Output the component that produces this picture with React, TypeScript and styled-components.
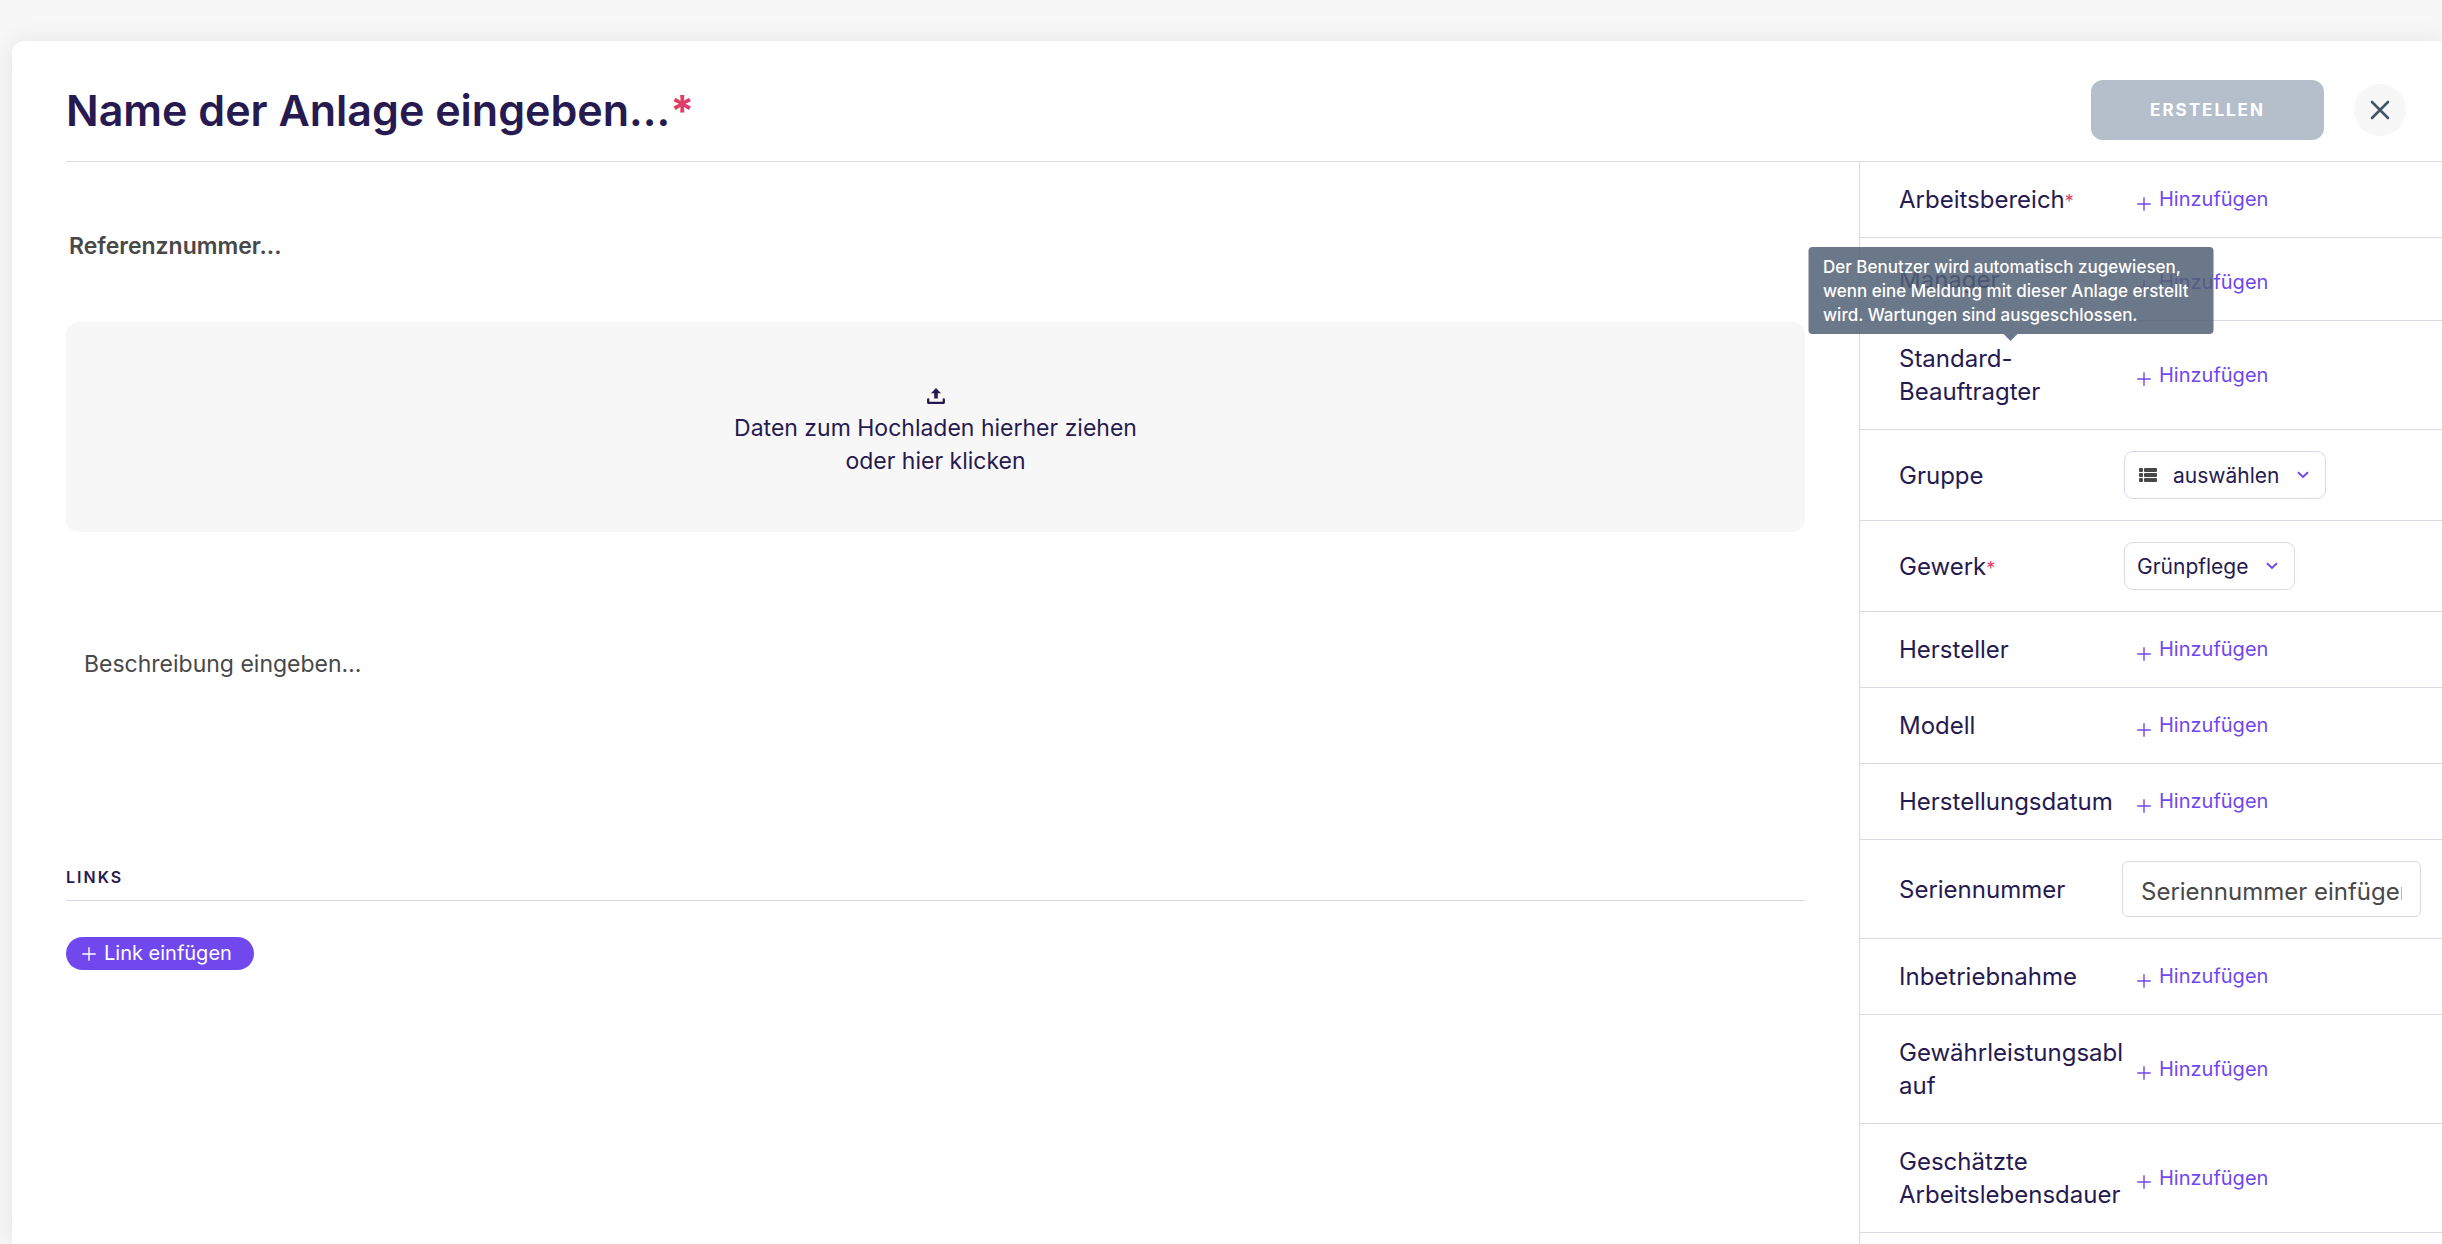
import React from "react";
import styled, { createGlobalStyle } from "styled-components";

const color = {
  ink: "#261a50",
  text: "#484848",
  violet: "#7048ee",
  red: "#dc3d6b",
  line: "#d6dbe4",
  soft: "#f7f7f7",
  slate: "#43556b",
  disabled: "#b5bfcc",
};

const GlobalStyle = createGlobalStyle`
  *, *::before, *::after { box-sizing: border-box; }
  body { margin: 0; background: ${color.soft}; }
  body, button, input, select, textarea {
    font-family: Inter, "Liberation Sans", sans-serif;
  }
`;

const Page = styled.div`
  display: flex;
  flex-direction: column;
  height: 100vh;
  padding: 41px 0 0 12px;
  overflow: hidden;
  color: ${color.ink};
`;

const Card = styled.main`
  flex: 1;
  display: flex;
  flex-direction: column;
  min-height: 0;
  padding-left: 54px;
  background: #fff;
  border-radius: 12px 0 0 0;
  box-shadow: 0 0 24px rgba(0, 0, 0, 0.08);
`;

const Header = styled.header`
  display: flex;
  align-items: center;
  height: 121px;
  flex-shrink: 0;
  padding: 18px 36px 0 0;
  border-bottom: 1px solid ${color.line};
`;

const TitleField = styled.div`
  flex: 1;
  display: flex;
  align-items: center;
  font-size: 43px;
  line-height: 60px;
  font-weight: 700;
`;

const TitleInput = styled.input`
  field-sizing: content;
  padding: 0;
  border: 0;
  outline: 0;
  background: none;
  color: ${color.ink};
  font-size: 43px;
  line-height: 60px;
  font-weight: 600;
  &::placeholder { color: ${color.ink}; opacity: 1; }
`;

const Required = styled.span<{ $small?: boolean }>`
  color: ${color.red};
  font-size: ${(p) => (p.$small ? "18px" : "inherit")};
  line-height: 1;
`;

const CreateButton = styled.button`
  height: 60px;
  width: 233px;
  border: 0;
  border-radius: 12px;
  background: ${color.disabled};
  color: #fff;
  font-size: 17px;
  font-weight: 700;
  letter-spacing: 2px;
  text-transform: uppercase;
`;

const CloseButton = styled.button`
  display: flex;
  align-items: center;
  justify-content: center;
  width: 52px;
  height: 52px;
  margin-left: 30px;
  padding: 0;
  border: 0;
  border-radius: 50%;
  background: ${color.soft};
  color: ${color.slate};
`;

const Columns = styled.div`
  flex: 1;
  display: flex;
  min-height: 0;
`;

const Content = styled.div`
  flex: 1;
  display: flex;
  flex-direction: column;
  padding: 64px 54px 0 0;
`;

const ReferenceInput = styled.input`
  height: 40px;
  padding: 0 3px;
  border: 0;
  outline: 0;
  color: ${color.text};
  font-size: 23px;
  font-weight: 600;
  &::placeholder { color: ${color.text}; opacity: 1; }
`;

const DropZone = styled.button`
  display: flex;
  flex-direction: column;
  align-items: center;
  height: 210px;
  margin-top: 56px;
  padding: 66px 0 0;
  border: 0;
  border-radius: 12px;
  background: ${color.soft};
  color: ${color.ink};
  font-size: 23px;
  line-height: 33px;
  svg { margin-bottom: 8px; }
`;

const Description = styled.textarea`
  height: 196px;
  margin-top: 116px;
  padding: 0 18px;
  border: 0;
  outline: 0;
  resize: none;
  color: ${color.text};
  font-size: 23px;
  line-height: 33px;
  &::placeholder { color: ${color.text}; opacity: 1; }
`;

const SectionTitle = styled.h2`
  margin: 21px 0 0;
  padding-bottom: 11px;
  border-bottom: 1px solid ${color.line};
  font-size: 16px;
  line-height: 24px;
  font-weight: 600;
  letter-spacing: 2px;
  text-transform: uppercase;
`;

const LinkButton = styled.button`
  align-self: flex-start;
  display: flex;
  align-items: center;
  gap: 8px;
  height: 33px;
  margin-top: 36px;
  padding: 0 22px 0 16px;
  border: 0;
  border-radius: 17px;
  background: ${color.violet};
  color: #fff;
  font-size: 20px;
  line-height: 33px;
`;

const Sidebar = styled.aside`
  width: 583px;
  flex-shrink: 0;
  border-left: 1px solid ${color.line};
`;

const Row = styled.div`
  display: flex;
  align-items: center;
  padding: 21px 21px 21px 39px;
  border-bottom: 1px solid ${color.line};
`;

const LabelBox = styled.div`
  position: relative;
  width: 223px;
  flex-shrink: 0;
`;

const Label = styled.label`
  display: block;
  font-size: 24px;
  line-height: 33px;
`;

const AddButton = styled.button<{ $tall?: boolean }>`
  display: flex;
  align-items: center;
  gap: 8px;
  height: ${(p) => (p.$tall ? 40 : 33)}px;
  padding: ${(p) => (p.$tall ? 7 : 0)}px 0 0 15px;
  border: 0;
  background: none;
  color: ${color.violet};
  font-size: 20px;
  line-height: 33px;
  svg { margin-top: 8px; }
`;

const SelectBox = styled.div`
  display: flex;
  align-items: center;
  height: 48px;
  margin-left: 2px;
  padding: 0 16px 0 12px;
  border: 1px solid ${color.line};
  border-radius: 9px;
`;

const Select = styled.select`
  appearance: none;
  padding: 0;
  margin-right: 17px;
  border: 0;
  outline: 0;
  background: none;
  color: ${color.ink};
  font-size: 21px;
  line-height: 33px;
`;

const ListMark = styled.svg`
  margin: 0 16px 0 2px;
`;

const SerialInput = styled.input`
  flex: 1;
  min-width: 0;
  height: 56px;
  padding: 4px 18px 0;
  border: 1px solid ${color.line};
  border-radius: 6px;
  outline: 0;
  color: ${color.text};
  font-size: 24px;
  &::placeholder { color: ${color.text}; opacity: 1; }
`;

const Tooltip = styled.div`
  position: absolute;
  z-index: 1;
  bottom: calc(100% + 8px);
  left: 50%;
  width: 405px;
  transform: translateX(-50%);
  padding: 8px 15px 7px;
  border-radius: 4px;
  background: rgba(81, 96, 118, 0.85);
  color: #fff;
  font-size: 17px;
  line-height: 24px;
  font-weight: 500;
  white-space: nowrap;
  &::after {
    content: "";
    position: absolute;
    top: 100%;
    left: 50%;
    margin-left: -7px;
    border: 7px solid transparent;
    border-bottom-width: 0;
    border-top-color: rgba(81, 96, 118, 0.85);
  }
`;

const PlusIcon = () => (
  <svg width="14" height="14" viewBox="0 0 14 14" fill="none" stroke="currentColor" strokeWidth="1.4" aria-hidden="true">
    <path d="M7 0.3v13.4M0.3 7h13.4" />
  </svg>
);

const CloseIcon = () => (
  <svg width="20" height="20" viewBox="0 0 20 20" fill="none" stroke="currentColor" strokeWidth="2.6" strokeLinecap="round" aria-hidden="true">
    <path d="M2 2l16 16M18 2L2 18" />
  </svg>
);

const ChevronIcon = () => (
  <svg width="12" height="8" viewBox="0 0 12 8" fill="none" stroke={color.violet} strokeWidth="1.9" aria-hidden="true">
    <path d="M1 1.2l5 4.8 5-4.8" />
  </svg>
);

const UploadIcon = () => (
  <svg width="18" height="16" viewBox="0 0 18 16" fill="none" aria-hidden="true">
    <path d="M9 0l5 5.2h-3.2v5.3H7.2V5.2H4z" fill="currentColor" />
    <path d="M1.2 11.4v3.4h15.6v-3.4" stroke="currentColor" strokeWidth="2.3" strokeLinecap="round" strokeLinejoin="round" />
  </svg>
);

const ListIcon = () => (
  <ListMark width="18" height="14" viewBox="0 0 18 14" fill={color.text} aria-hidden="true">
    {[0, 5, 10].map((y) => (
      <g key={y}>
        <rect x="0" y={y} width="4" height="4" rx="1" />
        <rect x="5" y={y} width="13" height="4" rx="1" />
      </g>
    ))}
  </ListMark>
);

type Field = {
  id: string;
  label: React.ReactNode;
  kind?: "select" | "input";
  value?: string;
  required?: boolean;
  listIcon?: boolean;
  tall?: boolean;
  hint?: React.ReactNode;
};

const fields: Field[] = [
  { id: "arbeitsbereich", label: "Arbeitsbereich", required: true },
  { id: "manager", label: "Manager", tall: true },
  {
    id: "beauftragter",
    label: <>Standard-<br />Beauftragter</>,
    hint: (
      <>
        Der Benutzer wird automatisch zugewiesen,
        <br />
        wenn eine Meldung mit dieser Anlage erstellt
        <br />
        wird. Wartungen sind ausgeschlossen.
      </>
    ),
  },
  { id: "gruppe", label: "Gruppe", kind: "select", value: "auswählen", listIcon: true },
  { id: "gewerk", label: "Gewerk", kind: "select", value: "Grünpflege", required: true },
  { id: "hersteller", label: "Hersteller" },
  { id: "modell", label: "Modell" },
  { id: "herstellungsdatum", label: "Herstellungsdatum" },
  { id: "seriennummer", label: "Seriennummer", kind: "input", value: "Seriennummer einfügen" },
  { id: "inbetriebnahme", label: "Inbetriebnahme" },
  { id: "gewaehrleistung", label: <>Gewährleistungsabl<br />auf</> },
  { id: "lebensdauer", label: <>Geschätzte<br />Arbeitslebensdauer</> },
];

const Control = ({ field }: { field: Field }) => {
  if (field.kind === "select") {
    return (
      <SelectBox>
        {field.listIcon && <ListIcon />}
        <Select id={field.id} defaultValue={field.value}>
          <option>{field.value}</option>
        </Select>
        <ChevronIcon />
      </SelectBox>
    );
  }
  if (field.kind === "input") {
    return <SerialInput id={field.id} type="text" placeholder={field.value} />;
  }
  return (
    <AddButton id={field.id} type="button" $tall={field.tall}>
      <PlusIcon />
      Hinzufügen
    </AddButton>
  );
};

export default function App() {
  return (
    <>
      <GlobalStyle />
      <Page>
        <Card>
          <Header>
            <TitleField>
              <TitleInput type="text" aria-label="Name der Anlage" placeholder="Name der Anlage eingeben..." />
              <Required>*</Required>
            </TitleField>
            <CreateButton type="button">Erstellen</CreateButton>
            <CloseButton type="button" aria-label="Schließen">
              <CloseIcon />
            </CloseButton>
          </Header>
          <Columns>
            <Content>
              <ReferenceInput type="text" aria-label="Referenznummer" placeholder="Referenznummer..." />
              <DropZone type="button">
                <UploadIcon />
                <span>Daten zum Hochladen hierher ziehen</span>
                <span>oder hier klicken</span>
              </DropZone>
              <Description aria-label="Beschreibung" placeholder="Beschreibung eingeben…" />
              <SectionTitle>Links</SectionTitle>
              <LinkButton type="button">
                <PlusIcon />
                Link einfügen
              </LinkButton>
            </Content>
            <Sidebar>
              {fields.map((field) => (
                <Row key={field.id}>
                  <LabelBox>
                    <Label htmlFor={field.id}>
                      {field.label}
                      {field.required && <Required $small>*</Required>}
                    </Label>
                    {field.hint && <Tooltip role="tooltip">{field.hint}</Tooltip>}
                  </LabelBox>
                  <Control field={field} />
                </Row>
              ))}
            </Sidebar>
          </Columns>
        </Card>
      </Page>
    </>
  );
}
